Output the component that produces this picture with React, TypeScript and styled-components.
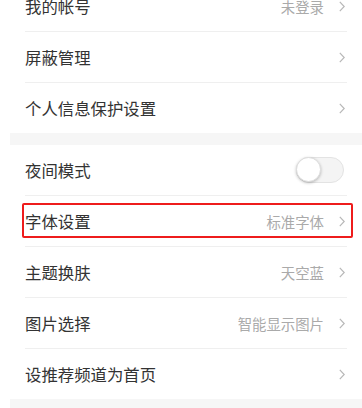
import React from "react";
import styled, { createGlobalStyle } from "styled-components";

const Global = createGlobalStyle`
  html, body { margin: 0; padding: 0; background: #ffffff; }
  body { font-family: "Noto Sans CJK SC", "Noto Sans", sans-serif; overflow: hidden; }
  #root { width: 362px; height: 408px; overflow: hidden; }
`;

const Page = styled.div`
  margin-left: 10px;
  margin-top: -19px;
  display: flex;
  flex-direction: column;
`;

const Section = styled.div`
  background: #ffffff;
  display: flex;
  flex-direction: column;
`;

const Band = styled.div`
  height: 12px;
  background: #f6f6f6;
`;

const Row = styled.div<{ $last?: boolean }>`
  position: relative;
  height: 50px;
  margin: 0 15px;
  padding-right: 2px;
  display: flex;
  align-items: center;
  justify-content: space-between;
  border-bottom: ${(p) => (p.$last ? "none" : "1px solid #efefef")};
`;

const Label = styled.span`
  font-size: 16.4px;
  color: #333333;
  letter-spacing: 0;
`;

const Right = styled.div`
  display: flex;
  align-items: center;
  gap: 15px;
`;

const Value = styled.span`
  font-size: 14.4px;
  color: #aaaaaa;
`;

const Toggle = styled.div`
  position: relative;
  width: 46px;
  height: 24px;
  border-radius: 13px;
  border: 1px solid #e3e3e3;
  background: #f4f4f4;
  margin-right: 1px;
`;

const Knob = styled.div`
  position: absolute;
  left: -1px;
  top: -1px;
  width: 25px;
  height: 25px;
  border-radius: 50%;
  background: #ffffff;
  border: 1px solid #dddddd;
  box-sizing: border-box;
  box-shadow: 0 1px 3px rgba(0, 0, 0, 0.25);
`;

const Highlight = styled.div`
  position: absolute;
  left: -3px;
  right: -6px;
  top: 7px;
  bottom: 8px;
  border: 2px solid #ee1c1c;
  border-radius: 2px;
  pointer-events: none;
`;

const Chevron = () => (
  <svg width="6" height="11" viewBox="0 0 6 11" fill="none">
    <polyline points="0.8,0.8 5.2,5.5 0.8,10.2" stroke="#b8b8b8" strokeWidth="1.2" fill="none" />
  </svg>
);

type Item = { label: string; value?: string; toggle?: boolean; highlight?: boolean };

const section1: Item[] = [
  { label: "我的帐号", value: "未登录" },
  { label: "屏蔽管理" },
  { label: "个人信息保护设置" },
];

const section2: Item[] = [
  { label: "夜间模式", toggle: true },
  { label: "字体设置", value: "标准字体", highlight: true },
  { label: "主题换肤", value: "天空蓝" },
  { label: "图片选择", value: "智能显示图片" },
  { label: "设推荐频道为首页" },
];

const renderRows = (items: Item[]) =>
  items.map((it, i) => (
    <Row key={it.label} $last={i === items.length - 1}>
      <Label>{it.label}</Label>
      <Right>
        {it.toggle ? (
          <Toggle>
            <Knob />
          </Toggle>
        ) : (
          <>
            {it.value && <Value>{it.value}</Value>}
            <Chevron />
          </>
        )}
      </Right>
      {it.highlight && <Highlight />}
    </Row>
  ));

export default function App() {
  return (
    <>
      <Global />
      <Page>
        <Section>{renderRows(section1)}</Section>
        <Band />
        <Section>{renderRows(section2)}</Section>
        <Band />
      </Page>
    </>
  );
}
